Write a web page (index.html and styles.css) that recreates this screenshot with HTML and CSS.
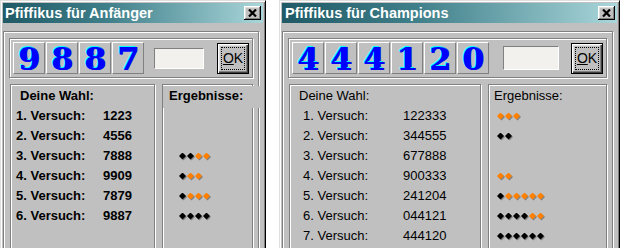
FILE: index.html
```html
<!DOCTYPE html>
<html lang="de">
<head>
    <meta charset="UTF-8">
    <title>Pfiffikus</title>
    <link rel="stylesheet" href="styles.css">
</head>
<body>
    <div class="window beginner">
        <div class="title-bar">
            <span class="title">Pfiffikus für Anfänger</span>
            <button class="close-btn"><svg width="9" height="8" viewBox="0 0 9 8"><path d="M1 0.5 L8 7.5 M8 0.5 L1 7.5" stroke="#000" stroke-width="2.2"/></svg></button>
        </div>
        <div class="group">
            <div class="code-panel">
                <div class="digits">
                    <span class="digit">9</span>
                    <span class="digit">8</span>
                    <span class="digit">8</span>
                    <span class="digit">7</span>
                </div>
                <div class="guess-input"></div>
                <button class="ok-btn"><span class="focus"><u>O</u>K</span></button>
            </div>
            <div class="result-area">
                <div class="panel choices">
                    <div class="panel-head">Deine Wahl:</div>
                    <div class="row"><span class="label">1. Versuch:</span><span>1223</span></div>
                    <div class="row"><span class="label">2. Versuch:</span><span>4556</span></div>
                    <div class="row"><span class="label">3. Versuch:</span><span>7888</span></div>
                    <div class="row"><span class="label">4. Versuch:</span><span>9909</span></div>
                    <div class="row"><span class="label">5. Versuch:</span><span>7879</span></div>
                    <div class="row"><span class="label">6. Versuch:</span><span>9887</span></div>
                </div>
                <div class="panel results">
                    <div class="panel-head">Ergebnisse:</div>
                    <div class="pins"></div>
                    <div class="pins"></div>
                    <div class="pins"><i class="pin"></i><i class="pin"></i><i class="pin o"></i><i class="pin o"></i></div>
                    <div class="pins"><i class="pin"></i><i class="pin o"></i><i class="pin o"></i></div>
                    <div class="pins"><i class="pin"></i><i class="pin o"></i><i class="pin o"></i><i class="pin o"></i></div>
                    <div class="pins"><i class="pin"></i><i class="pin"></i><i class="pin"></i><i class="pin"></i></div>
                </div>
            </div>
        </div>
    </div>

    <div class="window champion">
        <div class="title-bar">
            <span class="title">Pfiffikus für Champions</span>
            <button class="close-btn"><svg width="9" height="8" viewBox="0 0 9 8"><path d="M1 0.5 L8 7.5 M8 0.5 L1 7.5" stroke="#000" stroke-width="2.2"/></svg></button>
        </div>
        <div class="group">
            <div class="code-panel">
                <div class="digits">
                    <span class="digit">4</span>
                    <span class="digit">4</span>
                    <span class="digit">4</span>
                    <span class="digit">1</span>
                    <span class="digit">2</span>
                    <span class="digit">0</span>
                </div>
                <div class="guess-input"></div>
                <button class="ok-btn"><span class="focus"><u>O</u>K</span></button>
            </div>
            <div class="result-area">
                <div class="panel choices">
                    <div class="panel-head">Deine Wahl:</div>
                    <div class="row"><span class="label">1. Versuch:</span><span>122333</span></div>
                    <div class="row"><span class="label">2. Versuch:</span><span>344555</span></div>
                    <div class="row"><span class="label">3. Versuch:</span><span>677888</span></div>
                    <div class="row"><span class="label">4. Versuch:</span><span>900333</span></div>
                    <div class="row"><span class="label">5. Versuch:</span><span>241204</span></div>
                    <div class="row"><span class="label">6. Versuch:</span><span>044121</span></div>
                    <div class="row"><span class="label">7. Versuch:</span><span>444120</span></div>
                </div>
                <div class="panel results">
                    <div class="panel-head">Ergebnisse:</div>
                    <div class="pins"><i class="pin o"></i><i class="pin o"></i><i class="pin o"></i></div>
                    <div class="pins"><i class="pin"></i><i class="pin"></i></div>
                    <div class="pins"></div>
                    <div class="pins"><i class="pin o"></i><i class="pin o"></i></div>
                    <div class="pins"><i class="pin"></i><i class="pin o"></i><i class="pin o"></i><i class="pin o"></i><i class="pin o"></i><i class="pin o"></i></div>
                    <div class="pins"><i class="pin"></i><i class="pin"></i><i class="pin"></i><i class="pin"></i><i class="pin o"></i><i class="pin o"></i></div>
                    <div class="pins"><i class="pin"></i><i class="pin"></i><i class="pin"></i><i class="pin"></i><i class="pin"></i><i class="pin"></i></div>
                </div>
            </div>
        </div>
    </div>
</body>
</html>
```

FILE: styles.css
```css
body {
    margin: 0;
    background: #ffffff;
    display: flex;
    gap: 13px;
    height: 248px;
    overflow: hidden;
    font-family: "Liberation Sans", Arial, sans-serif;
    font-size: 13px;
    color: #000;
}

.window {
    background: #c0c0c0;
    border: 1px solid;
    border-color: #dfdfdf #000 #000 #dfdfdf;
    box-shadow: inset 1px 1px #fff, inset -1px -1px #808080;
    padding: 2px;
    height: 290px;
    box-sizing: border-box;
    display: flex;
    flex-direction: column;
}

.beginner {
    width: 266px;
    font-weight: bold;
}

.champion {
    width: 341px;
}

/* Titelleiste */
.title-bar {
    height: 20px;
    flex-shrink: 0;
    display: flex;
    align-items: center;
    justify-content: space-between;
    background: linear-gradient(to right, #1f5a66, #3f7f8a 40%, #a9d6da);
}

.title {
    color: #fff;
    font-size: 14.5px;
    font-weight: bold;
    padding-left: 2px;
}

.champion .title {
    padding-left: 3px;
}

.close-btn {
    width: 17px;
    height: 14px;
    margin-right: 2px;
    padding: 0;
    border: none;
    background: #c0c0c0;
    box-shadow: inset -1px -1px #000, inset 1px 1px #fff, inset -2px -2px #808080, inset 2px 2px #dfdfdf;
    display: flex;
    align-items: center;
    justify-content: center;
}

/* eingeritzte Rahmen */
.group,
.code-panel,
.panel {
    border: 1px solid #808080;
    box-shadow: inset 1px 1px #fff, 1px 1px #fff;
}

.group {
    flex: 1;
    margin: 8px 4px 0 0;
    padding: 6px 5px 0 5px;
    display: flex;
    flex-direction: column;
}

.code-panel {
    padding: 3px;
    display: flex;
    align-items: center;
}

.digits {
    display: flex;
    gap: 1px;
}

.digit {
    width: 30px;
    height: 30px;
    border: 1px solid;
    border-color: #fff #808080 #808080 #fff;
    text-align: center;
    font-family: "DejaVu Serif", "Liberation Serif", serif;
    font-size: 31px;
    font-weight: bold;
    line-height: 32px;
    color: #0000ff;
    text-shadow: -1px -1px 0 #00ffff, 1px 0 0 #0000ff;
}

.guess-input {
    width: 48px;
    height: 19px;
    margin-left: 10px;
    border: 1px solid;
    border-color: #808080 #fff #fff #808080;
    background: #f3f1ee;
}

.champion .guess-input {
    width: 54px;
    height: 22px;
    margin-left: 14px;
}

.ok-btn {
    width: 32px;
    height: 31px;
    margin-left: 13px;
    padding: 3px;
    border: 1px solid #000;
    background: #c0c0c0;
    box-shadow: inset 1px 1px #fff, inset -1px -1px #404040, inset -2px -2px #808080, inset 2px 2px #dfdfdf;
    font-family: "Liberation Sans", Arial, sans-serif;
    font-size: 14px;
    font-weight: normal;
}

.champion .ok-btn {
    margin-left: 12px;
}

.focus {
    display: flex;
    align-items: center;
    justify-content: center;
    height: 100%;
    border: 1px dotted #000;
    box-sizing: border-box;
}

.result-area {
    flex: 1;
    display: flex;
    gap: 7px;
    margin-top: 6px;
    padding-left: 1px;
}

.panel {
    padding-top: 1px;
}

.beginner .choices {
    width: 143px;
}

.champion .choices {
    width: 190px;
}

.results {
    flex: 1;
}

.panel-head,
.row,
.pins {
    height: 20px;
    line-height: 20px;
}

.choices .panel-head {
    padding-left: 9px;
}

.row {
    display: flex;
}

.beginner .label {
    width: 87px;
    padding-left: 5px;
}

.champion .label {
    width: 100px;
    padding-left: 13px;
}

.beginner .results .panel-head {
    padding-left: 6px;
    margin-right: -8px;
    padding-bottom: 2px;
    margin-bottom: -2px;
    background: #c0c0c0; /* Beschriftung ragt über den Rahmen */
}

.champion .results .panel-head {
    padding-left: 5px;
}

/* Ergebnis-Steckstifte */
.pins {
    display: flex;
    align-items: center;
    gap: 1px;
    filter: drop-shadow(1px 1px 0 #808080);
}

.beginner .pins {
    padding-left: 16px;
}

.champion .pins {
    padding-left: 8px;
}

.pin {
    width: 7px;
    height: 7px;
    background: #000;
    clip-path: polygon(50% 0, 100% 50%, 50% 100%, 0 50%);
}

.pin.o {
    background: #ff8000;
}
```
